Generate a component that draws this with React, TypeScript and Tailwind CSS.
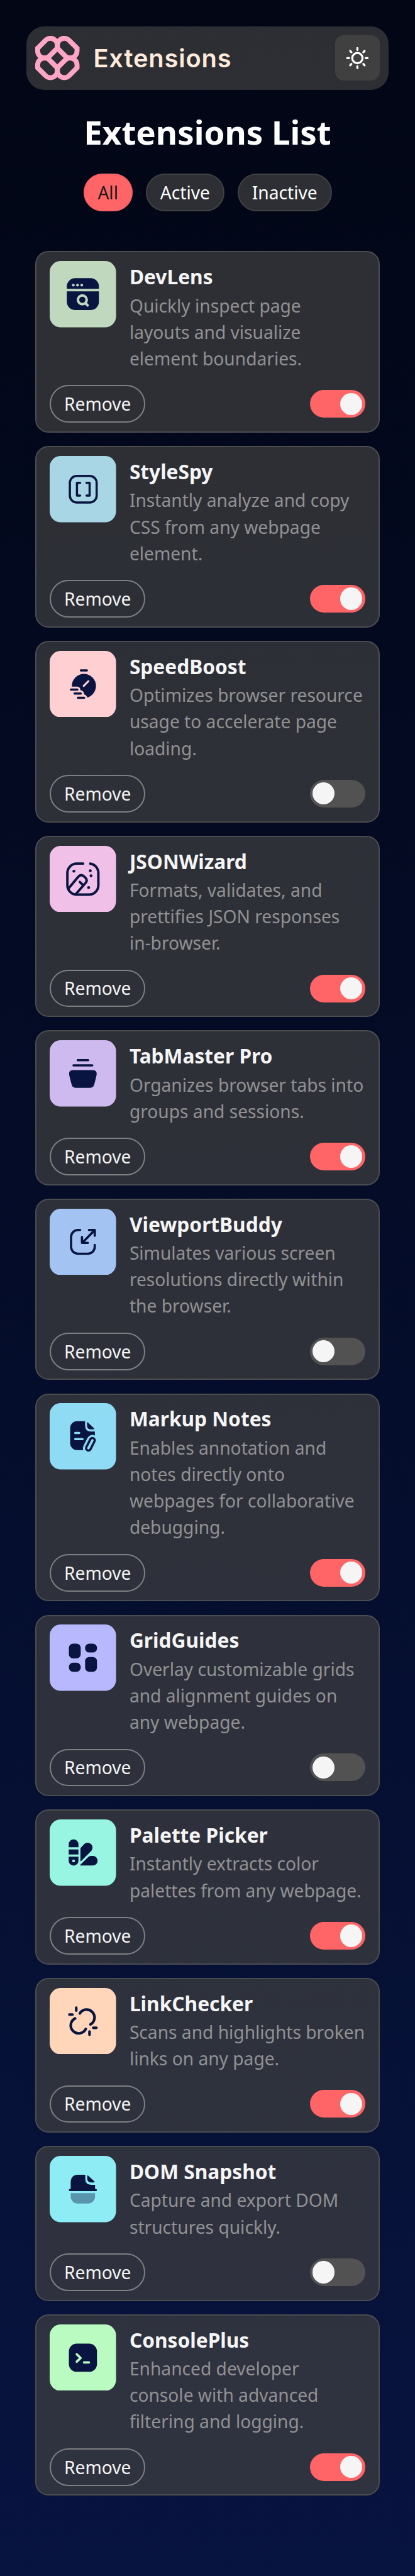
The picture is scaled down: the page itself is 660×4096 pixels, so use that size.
import React, { useState } from "react";

const NAVY = "#091540";

function Logo() {
  const lobe =
    "M4.4 27.5V22.4L18.6 8.2A12.5 12.5 0 0 1 40 17V22.2L25.9 36.3A12.6 12.6 0 0 1 4.4 27.5Z";
  return (
    <svg viewBox="0 0 80 80" className="size-[70.4px] shrink-0" fill="none" stroke="#ffa6c5" strokeWidth="9">
      <path d={lobe} />
      <path d={lobe} transform="matrix(-1 0 0 1 80 0)" />
      <path d={lobe} transform="matrix(1 0 0 -1 0 80)" />
      <path d={lobe} transform="matrix(-1 0 0 -1 80 80)" />
    </svg>
  );
}

function Sun() {
  return (
    <svg viewBox="0 0 22 22" className="size-[38.72px]" fill="none" stroke="#fff" strokeWidth="1.9" strokeLinecap="round">
      <circle cx="11" cy="11" r="4.65" />
      <path d="M11 1.95v1.6M11 18.45v1.6M1.8 11h1.7M18.5 11h1.7M4.5 4.5l1.1 1.2M17.5 4.5l-1.1 1.2M4.5 17.5l1.1-1.2M17.5 17.5l-1.1-1.2" />
    </svg>
  );
}

type Extension = {
  name: string;
  text: string;
  on: boolean;
  tile: string;
  art: (tile: string) => React.ReactNode;
};

const line = { fill: "none", stroke: NAVY, strokeLinecap: "round", strokeLinejoin: "round" } as const;

const extensions: Extension[] = [
  {
    name: "DevLens",
    text: "Quickly inspect page layouts and visualize element boundaries.",
    on: true,
    tile: "#c0d8be",
    art: (t) => (
      <>
        <path fill={NAVY} d="M31 50.2V46A15 15 0 0 1 46 31H74A15 15 0 0 1 89 46V50.2ZM31 54.7H89V74A15 15 0 0 1 74 88.7H46A15 15 0 0 1 31 74Z" />
        <g fill={t}>
          <circle cx="42.7" cy="43.6" r="2.5" />
          <circle cx="50.3" cy="43.6" r="2.5" />
          <circle cx="58" cy="43.6" r="2.5" />
        </g>
        <g fill="none" stroke={t} strokeWidth="4.6" strokeLinecap="round">
          <circle cx="59" cy="70.2" r="7.9" />
          <path d="M65 76.2l3.6 4" />
        </g>
      </>
    ),
  },
  {
    name: "StyleSpy",
    text: "Instantly analyze and copy CSS from any webpage element.",
    on: true,
    tile: "#a9d6e5",
    art: () => (
      <g {...line} strokeWidth="4">
        <rect x="36.5" y="36.1" width="48.4" height="48" rx="12.5" />
        <path d="M55 48.5H49.3V71.7H55M66.6 48.5H72.2V71.7H66.6" />
      </g>
    ),
  },
  {
    name: "SpeedBoost",
    text: "Optimizes browser resource usage to accelerate page loading.",
    on: false,
    tile: "#ffcfd2",
    art: (t) => (
      <>
        <circle cx="61.9" cy="63.3" r="21.8" fill={NAVY} />
        <path fill={t} d="M30 64.5H50A6 6 0 0 1 55.5 71Q62 71.5 62.3 78.8Q66 79.5 67.6 83.5L66 92H30Z" />
        <path d="M61.5 63.1L70 54.7" stroke={t} strokeWidth="3.6" strokeLinecap="round" />
        <path {...line} strokeWidth="4" d="M56.3 35.3H67.3M38.3 70H50M45 76.9H56.3M51 84.6H62.3" />
      </>
    ),
  },
  {
    name: "JSONWizard",
    text: "Formats, validates, and prettifies JSON responses in-browser.",
    on: true,
    tile: "#f1c0e8",
    art: () => (
      <>
        <g {...line} strokeWidth="4.4">
          <path d="M60.5 32H49A17 17 0 0 0 32 49V71A17 17 0 0 0 49 88.1H71A17 17 0 0 0 88 71V49A17 17 0 0 0 73.3 32.1" />
          <path d="M34 77L51.3 56.3Q56.6 50 62.2 55.2L64.6 57.6Q69.2 62.3 64.6 67.4L47.5 87M54.5 65.1L59.8 70.2" />
        </g>
        <g fill={NAVY}>
          <circle cx="43.8" cy="45.7" r="2.6" />
          <circle cx="73.4" cy="45" r="2.6" />
          <circle cx="74.7" cy="54.1" r="2.6" />
          <circle cx="70.4" cy="75.3" r="2.6" />
        </g>
      </>
    ),
  },
  {
    name: "TabMaster Pro",
    text: "Organizes browser tabs into groups and sessions.",
    on: true,
    tile: "#cfbaf0",
    art: () => (
      <>
        <path {...line} strokeWidth="4" d="M50.6 36.1H69.6M43 45.4H77" />
        <path fill={NAVY} d="M42.5 54H77.5Q86.5 54.3 84.8 63L80.7 79.5Q79 86 73 86H47Q41 86 39.5 79.5L35.3 63Q33.5 54.3 42.5 54Z" />
      </>
    ),
  },
  {
    name: "ViewportBuddy",
    text: "Simulates various screen resolutions directly within the browser.",
    on: false,
    tile: "#a3c4f3",
    art: () => (
      <path
        {...line}
        strokeWidth="4.1"
        d="M55 38.4H51.2A12.5 12.5 0 0 0 38.7 50.9V68.8A12.5 12.5 0 0 0 51.2 81.3H69A12.5 12.5 0 0 0 81.5 68.8V65.3M71 38.4H81.5V48.8M81.3 38.8L59 61.3M58.4 51V61.7H69"
      />
    ),
  },
  {
    name: "Markup Notes",
    text: "Enables annotation and notes directly onto webpages for collaborative debugging.",
    on: true,
    tile: "#90dbf4",
    art: (t) => (
      <>
        <path fill={NAVY} d="M64 32.7V40.5Q64 51.3 74.5 51.3H81.7V85H49.5A12.5 12.5 0 0 1 37 72.5V45.2A12.5 12.5 0 0 1 49.5 32.7Z" />
        <path fill={NAVY} d="M67.6 36Q67.6 33.6 69.3 35.2L80 45.4Q81.3 47.3 79.5 47.4H74Q67.6 47 67.6 40.5Z" />
        <path d="M46.2 54H53.4M46.2 65H59.4" stroke={t} strokeWidth="4" strokeLinecap="round" />
        <path d="M70 90H84V72Z" fill={t} />
        <g transform="rotate(27 73.6 74.4)" fill={t}>
          <rect x="69.4" y="62.3" width="8.4" height="24.2" rx="4.2" stroke={t} strokeWidth="11.4" />
          <rect x="69.4" y="62.3" width="8.4" height="24.2" rx="4.2" stroke={NAVY} strokeWidth="4" />
        </g>
      </>
    ),
  },
  {
    name: "GridGuides",
    text: "Overlay customizable grids and alignment guides on any webpage.",
    on: false,
    tile: "#b8b8ff",
    art: () => (
      <g fill={NAVY}>
        <rect x="34.7" y="34.7" width="21.4" height="26.6" rx="7.6" />
        <rect x="64" y="34.7" width="21.5" height="16" rx="7.6" />
        <rect x="34.7" y="69" width="21.4" height="16.4" rx="7.6" />
        <rect x="64" y="58.7" width="21.5" height="26.7" rx="7.6" />
      </g>
    ),
  },
  {
    name: "Palette Picker",
    text: "Instantly extracts color palettes from any webpage.",
    on: true,
    tile: "#98f5e1",
    art: (t) => (
      <>
        <path
          fill={NAVY}
          d="M34.4 50.2V44.8A8.8 8.8 0 0 1 52 44.8V50.2ZM34.4 54.3H52V63.3H34.4ZM34.4 67.4H52V74.6A8.8 8.8 0 0 1 34.4 74.6ZM55.6 75V53.4Q55.6 51.6 57 50.3L63 44A8.9 8.9 0 0 1 75.6 56.4L56.8 75.2Q55.6 76 55.6 75ZM55.3 83.3Q54.3 83.3 55 82.4L69.5 68.3Q71.8 66 75 66H78A8.65 8.65 0 0 1 78 83.3Z"
        />
        <circle cx="43.2" cy="75" r="2.5" fill={t} />
      </>
    ),
  },
  {
    name: "LinkChecker",
    text: "Scans and highlights broken links on any page.",
    on: true,
    tile: "#ffd6ba",
    art: () => (
      <path
        {...line}
        strokeWidth="4.8"
        d="M54.5 46A14.3 14.3 0 1 1 73.8 65.8M46 55A14.3 14.3 0 1 0 65.3 74M48 35.6V40.8M35.6 48H41.2M78.8 72H84.4M72 78.8V84.4"
      />
    ),
  },
  {
    name: "DOM Snapshot",
    text: "Capture and export DOM structures quickly.",
    on: false,
    tile: "#8eecf5",
    art: () => (
      <>
        <path fill={NAVY} d="M64.4 34V41.5Q64.4 52.2 75 52.2H82V59.7H83.4A2 2 0 0 1 83.4 63.7H36.6A2 2 0 0 1 36.6 59.7H38V46A12 12 0 0 1 50 34Z" />
        <path fill={NAVY} d="M68 36.5Q68 34.3 69.6 35.7L80.8 46Q82 47.8 80 48H74.5Q68 47.6 68 41.2Z" />
        <path fill={NAVY} fillOpacity="0.4" d="M38 67.2H82V73.5A12.5 12.5 0 0 1 69.5 86H50.5A12.5 12.5 0 0 1 38 73.5Z" />
      </>
    ),
  },
  {
    name: "ConsolePlus",
    text: "Enhanced developer console with advanced filtering and logging.",
    on: true,
    tile: "#b9fbc0",
    art: (t) => (
      <>
        <rect x="34.7" y="34.7" width="50.8" height="50.8" rx="14" fill={NAVY} />
        <path d="M49 54L55.8 60.6L49 67.2M62.2 68.7H70.8" fill="none" stroke={t} strokeWidth="4.3" strokeLinecap="round" strokeLinejoin="round" />
      </>
    ),
  },
];

function Toggle({ on, onChange }: { on: boolean; onChange: () => void }) {
  return (
    <button
      type="button"
      role="switch"
      aria-checked={on}
      onClick={onChange}
      className={`flex h-[44px] w-[88px] items-center rounded-full px-[4.4px] ${
        on ? "justify-end bg-[#ff6467]" : "justify-start bg-[#525252]"
      }`}
    >
      <span className="size-[35.2px] rounded-full bg-[#f5f5f5]" />
    </button>
  );
}

function Card({ item, on, onToggle, onRemove }: { item: Extension; on: boolean; onToggle: () => void; onRemove: () => void }) {
  return (
    <li className="flex flex-col gap-[21.12px] rounded-[21.12px] border-2 border-[#4c4d4f] bg-[#404040]/70 px-[20.88px] py-[13.84px]">
      <div className="flex items-start gap-[21.12px]">
        <svg viewBox="0 0 120 120" className="size-[105.6px] shrink-0">
          <rect width="120" height="120" rx="20" fill={item.tile} />
          {item.art(item.tile)}
        </svg>
        <div className="min-w-0 flex-1">
          <h2 className="text-[31.68px] leading-[49.28px] font-bold text-[#f5f5f5]">{item.name}</h2>
          <p className="text-[28.16px] leading-[42.24px] text-[#919193]">{item.text}</p>
        </div>
      </div>
      <div className="flex items-center justify-between">
        <button
          type="button"
          onClick={onRemove}
          className="h-[59.84px] rounded-full border-2 border-[#7e7f82] px-[20.88px] text-[28.16px] leading-[42.24px] text-[#f5f5f5]"
        >
          Remove
        </button>
        <Toggle on={on} onChange={onToggle} />
      </div>
    </li>
  );
}

const filters = ["All", "Active", "Inactive"] as const;

export default function App() {
  const [filter, setFilter] = useState<(typeof filters)[number]>("All");
  const [items, setItems] = useState(extensions);

  const shown = items.filter((e) => filter === "All" || e.on === (filter === "Active"));

  return (
    <div className="min-h-[4096px] w-full bg-linear-to-b from-[#020615] to-[#081440] px-[42.24px] pt-[42.24px] font-['Noto_Sans',sans-serif]">
      <header className="flex h-[100.32px] items-center rounded-[28.16px] bg-[#404040]/70 px-[14.08px]">
        <Logo />
        <span className="ml-[21.7px] pt-[1px] font-['Inter',sans-serif] text-[39.8px] leading-none font-semibold tracking-[0.85px] text-[#ffeadc]">
          Extensions
        </span>
        <button
          type="button"
          aria-label="Toggle theme"
          className="ml-auto flex h-[72.16px] w-[70.4px] items-center justify-center rounded-[14.08px] bg-[#404040]"
        >
          <Sun />
        </button>
      </header>

      <h1 className="mt-[35.2px] text-center text-[52.8px] leading-[63.36px] font-bold text-white">Extensions List</h1>

      <div className="mt-[35.2px] flex justify-center gap-[21.12px]">
        {filters.map((f) => (
          <button
            key={f}
            type="button"
            onClick={() => setFilter(f)}
            className={`h-[59.84px] rounded-full border-2 px-[20.88px] text-[28.16px] leading-[42.24px] ${
              f === filter
                ? "border-[#f96164] bg-[#ff6467] text-[#171717]"
                : "border-[#404040] bg-[#404040]/70 text-white"
            }`}
          >
            {f}
          </button>
        ))}
      </div>

      <ul className="mt-[63.36px] flex flex-col gap-[21.17px] px-[14.08px]">
        {shown.map((e) => (
          <Card
            key={e.name}
            item={e}
            on={e.on}
            onToggle={() => setItems(items.map((x) => (x.name === e.name ? { ...x, on: !x.on } : x)))}
            onRemove={() => setItems(items.filter((x) => x.name !== e.name))}
          />
        ))}
      </ul>
    </div>
  );
}
